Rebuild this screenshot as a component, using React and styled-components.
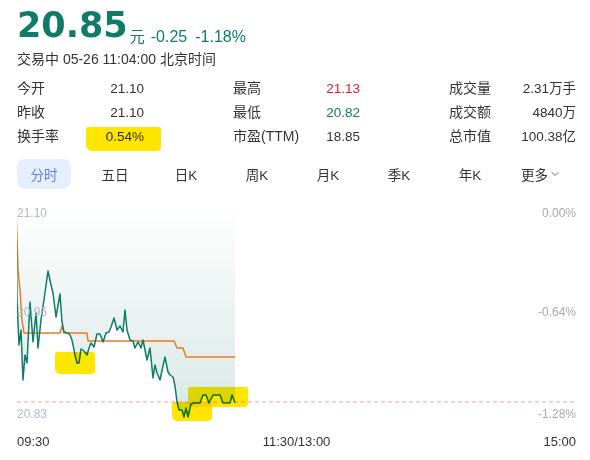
import React from "react";
import styled, { createGlobalStyle } from "styled-components";
import { ChevronDown } from "lucide-react";

const GlobalStyle = createGlobalStyle`
  body {
    margin: 0;
    background: #fff;
    font-family: "Liberation Sans", "Noto Sans CJK SC", sans-serif;
    color: #333;
  }
`;

const Page = styled.div`
  width: 590px;
  height: 460px;
  padding: 5px 14px 0 17px;
  box-sizing: border-box;
  overflow: hidden;
`;

const PriceRow = styled.div`
  display: flex;
  align-items: flex-end;
  color: #0e7c68;
`;

const Price = styled.span`
  font-family: "DejaVu Sans", sans-serif;
  font-weight: bold;
  font-size: 35px;
  line-height: 40px;
`;

const Change = styled.span`
  font-size: ${(p) => (p.$unit ? "15px" : "16px")};
  line-height: 16px;
  margin-left: ${(p) => p.$gap}px;
`;

const Status = styled.div`
  margin-top: 4px;
  font-size: 14px;
  line-height: 20px;
`;

const Stats = styled.div`
  display: grid;
  grid-template-columns: repeat(3, 127px);
  column-gap: 89px;
  margin-top: 7px;
`;

const Stat = styled.div`
  display: flex;
  justify-content: space-between;
  align-items: center;
  height: 24px;
  font-size: 14px;
  line-height: 16px;
`;

const Value = styled.span`
  position: relative;
  display: block;
  padding-top: 2px;
  font-size: 13.5px;
  color: ${(p) => p.$color || "#333"};

  ${(p) =>
    p.$marked &&
    `
    &::after {
      content: "";
      position: absolute;
      left: -20px;
      right: -17px;
      top: 0;
      bottom: -6px;
      background: #ffe600;
      border-radius: 2px 3px 4px 6px;
      mix-blend-mode: multiply;
    }
  `}
`;

const Tabs = styled.div`
  display: flex;
  justify-content: space-between;
  margin: 11px 8px 0 0;
`;

const Tab = styled.div`
  width: 54px;
  height: 30px;
  border-radius: 8px;
  display: flex;
  align-items: center;
  justify-content: center;
  gap: 1px;
  font-size: 13.5px;
  color: ${(p) => (p.$active ? "#5b7ef0" : "#333")};
  background: ${(p) => (p.$active ? "#e6efff" : "transparent")};
`;

const Chart = styled.div`
  position: relative;
  margin-top: 6px;
  width: 559px;
  height: 230px;

  svg {
    display: block;
  }
`;

const AxisLabel = styled.span`
  position: absolute;
  top: ${(p) => p.$top}px;
  ${(p) => (p.$right ? "right: 0;" : "left: 0;")}
  font-size: 12px;
  line-height: 14px;
  color: ${(p) => (p.$right ? "#a9a9a9" : "#b7b7c8")};
`;

const Mark = styled.div`
  position: absolute;
  left: ${(p) => p.$x}px;
  top: ${(p) => p.$y}px;
  width: ${(p) => p.$w}px;
  height: ${(p) => p.$h}px;
  background: #ffe600;
  border-radius: 2px 2px 4px 5px;
  mix-blend-mode: multiply;
`;

const TimeAxis = styled.div`
  display: flex;
  justify-content: space-between;
  margin-top: 9px;
  font-size: 13px;
  line-height: 16px;
  color: #333;
`;

const stats = [
  ["今开", "21.10"],
  ["最高", "21.13", "#e0202c"],
  ["成交量", "2.31万手"],
  ["昨收", "21.10"],
  ["最低", "20.82", "#0e7c68"],
  ["成交额", "4840万"],
  ["换手率", "0.54%", null, true],
  ["市盈(TTM)", "18.85"],
  ["总市值", "100.38亿"],
];

const tabs = ["分时", "五日", "日K", "周K", "月K", "季K", "年K"];

const price = [
  [16, 208], [17, 300], [19, 345], [21, 330], [23, 380], [25, 355], [27, 363],
  [30, 302], [33, 342], [36, 313], [38, 348], [41, 320], [44, 300], [48, 271],
  [51, 285], [53, 293], [56, 317], [60, 294], [62, 322], [64, 332], [68, 333],
  [70, 335], [72, 340], [75, 355], [77, 363], [79, 363], [81, 349], [84, 351],
  [87, 355], [89, 348], [91, 343], [94, 347], [97, 334], [100, 334], [103, 342],
  [106, 333], [109, 332], [111, 327], [114, 318], [117, 330], [120, 326],
  [123, 332], [125, 310], [127, 330], [130, 340], [133, 341], [135, 348],
  [138, 342], [141, 348], [143, 340], [145, 350], [147, 360], [150, 348],
  [153, 378], [155, 365], [157, 373], [160, 380], [163, 366], [165, 357],
  [168, 372], [170, 375], [173, 377], [175, 386], [177, 402], [179, 410],
  [182, 410], [184, 417], [186, 408], [188, 417], [191, 404], [194, 403],
  [200, 403], [203, 395], [206, 395], [209, 403], [213, 395], [220, 395],
  [223, 403], [230, 403], [232, 395], [235, 403],
];

const average = [
  [16, 208], [18, 270], [20, 290], [22, 320], [24, 333], [60, 333], [62, 326],
  [64, 333], [87, 333], [88, 341], [174, 341], [177, 348], [183, 348],
  [186, 357], [235, 357],
];

const toPath = (pts) => pts.map(([x, y], i) => `${i ? "L" : "M"}${x} ${y}`).join(" ");

const fillPath =
  "M16 205 L235 205 L235 403 " +
  price
    .slice()
    .reverse()
    .map(([x, y]) => `L${x} ${y}`)
    .join(" ") +
  " Z";

const App = () => (
  <Page>
    <GlobalStyle />
    <PriceRow>
      <Price>20.85</Price>
      <Change $unit $gap={2}>元</Change>
      <Change $gap={6}>-0.25</Change>
      <Change $gap={8}>-1.18%</Change>
    </PriceRow>
    <Status>交易中 05-26 11:04:00 北京时间</Status>

    <Stats>
      {stats.map(([label, value, color, marked]) => (
        <Stat key={label}>
          <span>{label}</span>
          <Value $color={color} $marked={marked}>
            {value}
          </Value>
        </Stat>
      ))}
    </Stats>

    <Tabs>
      {tabs.map((t, i) => (
        <Tab key={t} $active={i === 0}>
          {t}
        </Tab>
      ))}
      <Tab>
        更多
        <ChevronDown size={12} strokeWidth={1.5} />
      </Tab>
    </Tabs>

    <Chart>
      <svg width="559" height="230" viewBox="17 195 559 230">
        <defs>
          <linearGradient id="fade" x1="0" y1="205" x2="0" y2="403" gradientUnits="userSpaceOnUse">
            <stop offset="0" stopColor="#ffffff" />
            <stop offset="1" stopColor="#dbeae7" />
          </linearGradient>
        </defs>
        <path d={fillPath} fill="url(#fade)" />
        <line x1="17" y1="402" x2="576" y2="402" stroke="#f2a39c" strokeWidth="1" strokeDasharray="4 3" />
        <path d={toPath(average)} fill="none" stroke="#f07a22" strokeWidth="1.5" strokeLinejoin="round" />
        <path d={toPath(price)} fill="none" stroke="#0e7c68" strokeWidth="1.5" strokeLinejoin="round" />
      </svg>

      <AxisLabel $top={11}>21.10</AxisLabel>
      <AxisLabel $top={110}>20.96</AxisLabel>
      <AxisLabel $top={212}>20.83</AxisLabel>
      <AxisLabel $top={11} $right>0.00%</AxisLabel>
      <AxisLabel $top={110} $right>-0.64%</AxisLabel>
      <AxisLabel $top={212} $right>-1.28%</AxisLabel>

      <Mark $x={38} $y={157} $w={40} $h={22} />
      <Mark $x={155} $y={207} $w={40} $h={19} />
      <Mark $x={171} $y={192} $w={60} $h={20} />
    </Chart>

    <TimeAxis>
      <span>09:30</span>
      <span>11:30/13:00</span>
      <span>15:00</span>
    </TimeAxis>
  </Page>
);

export default App;
